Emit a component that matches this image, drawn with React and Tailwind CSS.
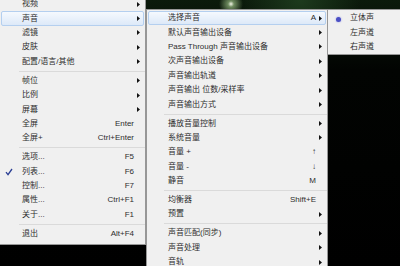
import clsx from 'clsx';

const MAIN = [
  { label: '视频', sub: true },
  { label: '声音', sub: true, active: true },
  { label: '滤镜', sub: true },
  { label: '皮肤', sub: true },
  { label: '配置/语言/其他', sub: true },
  { sep: true },
  { label: '帧位', sub: true },
  { label: '比例', sub: true },
  { label: '屏幕', sub: true },
  { label: '全屏', keys: 'Enter' },
  { label: '全屏+', keys: 'Ctrl+Enter' },
  { sep: true },
  { label: '选项...', keys: 'F5' },
  { label: '列表...', keys: 'F6', check: true },
  { label: '控制...', keys: 'F7' },
  { label: '属性...', keys: 'Ctrl+F1' },
  { label: '关于...', keys: 'F1' },
  { sep: true },
  { label: '退出', keys: 'Alt+F4' },
];

const AUDIO = [
  { label: '选择声音', keys: 'A', sub: true, active: true },
  { label: '默认声音输出设备', sub: true },
  { label: 'Pass Through 声音输出设备', sub: true },
  { label: '次声音输出设备', sub: true },
  { label: '声音输出轨道', sub: true },
  { label: '声音输出 位数/采样率', sub: true },
  { label: '声音输出方式', sub: true },
  { sep: true },
  { label: '播放音量控制', sub: true },
  { label: '系统音量', sub: true },
  { label: '音量 +', keys: '↑' },
  { label: '音量 -', keys: '↓' },
  { label: '静音', keys: 'M' },
  { sep: true },
  { label: '均衡器', keys: 'Shift+E' },
  { label: '预置', sub: true },
  { sep: true },
  { label: '声音匹配(同步)', sub: true },
  { label: '声音处理', sub: true },
  { label: '音轨', sub: true },
];

const CHANNELS = [
  { label: '立体声', radio: true },
  { label: '左声道' },
  { label: '右声道' },
];

function Arrow() {
  return (
    <svg width="3" height="5" viewBox="0 0 3 5">
      <path d="M0 0 L3 2.5 L0 5 Z" fill="#111" />
    </svg>
  );
}

function Row({ item, pad }) {
  return (
    <div
      className={clsx(
        'relative flex items-center h-[14.4px] pr-[3px] mx-[1px] rounded-[2px] border',
        item.active ? 'border-[#b4cfef] bg-gradient-to-b from-[#f5f9fe] to-[#dde9f8]' : 'border-transparent'
      )}
    >
      {item.check && (
        <svg className="absolute left-[3px] top-[3px]" width="8" height="8" viewBox="0 0 8 8">
          <path d="M1 4.2 L3 6.6 L7 1" fill="none" stroke="#2b3f94" strokeWidth="1.3" />
        </svg>
      )}
      {item.radio && (
        <span className="absolute left-[6px] top-[4.5px] w-[5px] h-[5px] rounded-full bg-[#4b4fc4] shadow-[0_0_2px_#8f95e8]" />
      )}
      <span className={clsx('flex-1 whitespace-nowrap leading-none', pad)}>{item.label}</span>
      {item.keys && <span className="whitespace-nowrap leading-none">{item.keys}</span>}
      <span className="w-[6px] flex justify-end">{item.sub && <Arrow />}</span>
    </div>
  );
}

function Sep({ inset }) {
  return (
    <div className="h-[4.6px] flex items-center">
      <div className={clsx('flex-1 h-px bg-[#dadada]', inset)} />
    </div>
  );
}

function Menu({ items, pad, inset, className }) {
  return (
    <div className={clsx('absolute border border-[#979797] bg-[#f0f0f0] text-[#2e2e2e]', className)}>
      {items.map((it, i) =>
        it.sep ? <Sep key={i} inset={inset} /> : <Row key={i} item={it} pad={pad} />
      )}
    </div>
  );
}

export default function App() {
  return (
    <div
      className="relative w-[400px] h-[266px] overflow-hidden bg-black bg-[radial-gradient(circle_at_231px_4px,#f2f6e6_0px,#6d8a5e_3px,transparent_12px),radial-gradient(ellipse_at_300px_0px,#1d3a1d_0px,transparent_60px),linear-gradient(to_bottom,#0b1a0b,#020402_70px,#000)] text-[8px] font-normal"
      style={{ fontFamily: '"Liberation Sans", "Noto Sans CJK SC", sans-serif' }}
    >
      <Menu items={MAIN} pad="pl-[20px]" inset="ml-[19px]" className="left-[-1px] top-[-6px] w-[147px] pt-[2px] pb-[3px]" />
      <Menu items={AUDIO} pad="pl-[19px]" inset="ml-[17px]" className="left-[146px] top-[9px] w-[182px] pt-[1px] z-10" />
      <Menu items={CHANNELS} pad="pl-[20px]" inset="ml-[17px]" className="left-[327px] top-[9px] w-[90px] pt-[1px] z-20" />
    </div>
  );
}
